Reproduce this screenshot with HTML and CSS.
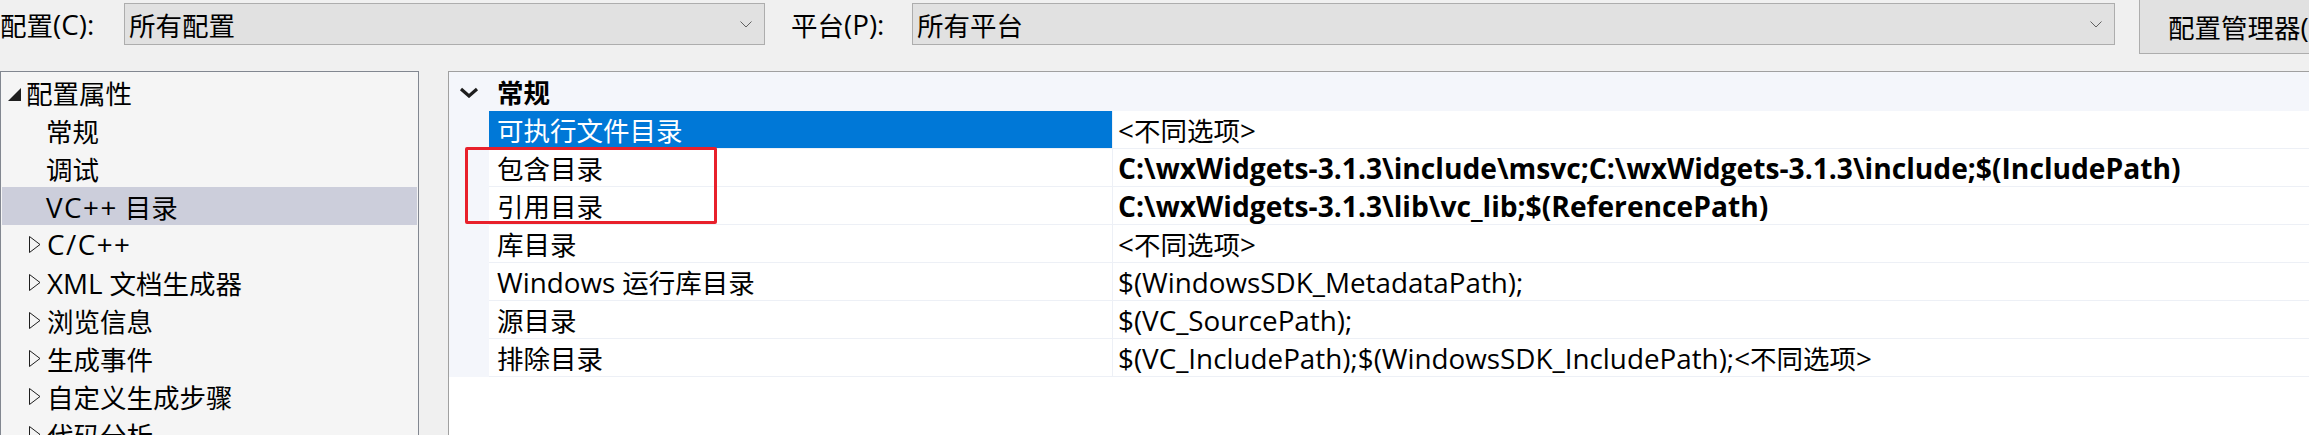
FILE: index.html
```html
<!DOCTYPE html>
<html lang="zh-CN">
<head>
<meta charset="utf-8">
<title>属性页</title>
<link rel="stylesheet" href="styles.css">
</head>
<body>
<div class="window">
  <div class="toolbar">
    <span class="lbl lbl-config">配置<span class="en">(C):</span></span>
    <div class="combo combo-config">
      <span class="combo-text">所有配置</span>
      <svg class="chev" width="12" height="7" viewBox="0 0 12 7"><polyline points="0.5,0.5 6,6 11.5,0.5" fill="none" stroke="#606060" stroke-width="1"/></svg>
    </div>
    <span class="lbl lbl-platform">平台<span class="en">(P):</span></span>
    <div class="combo combo-platform">
      <span class="combo-text">所有平台</span>
      <svg class="chev" width="12" height="7" viewBox="0 0 12 7"><polyline points="0.5,0.5 6,6 11.5,0.5" fill="none" stroke="#606060" stroke-width="1"/></svg>
    </div>
    <div class="btn">配置管理器<span class="en">(O)...</span></div>
  </div>

  <div class="main">
    <div class="tree">
      <div class="node lvl0">
        <svg class="tri-open" width="13" height="13" viewBox="0 0 13 13"><polygon points="0,13 13,13 13,0" fill="#1e1e1e"/></svg>
        <span>配置属性</span>
      </div>
      <div class="node lvl1"><span>常规</span></div>
      <div class="node lvl1"><span>调试</span></div>
      <div class="node lvl1 selected"><span><span class="en wide">VC++</span> 目录</span></div>
      <div class="node lvl1 collapsed">
        <svg class="tri-closed" width="12" height="17" viewBox="0 0 12 17"><polygon points="0.5,0.5 11,8.5 0.5,16.5" fill="none" stroke="#1e1e1e" stroke-width="1"/></svg>
        <span class="en wide">C/C++</span>
      </div>
      <div class="node lvl1 collapsed">
        <svg class="tri-closed" width="12" height="17" viewBox="0 0 12 17"><polygon points="0.5,0.5 11,8.5 0.5,16.5" fill="none" stroke="#1e1e1e" stroke-width="1"/></svg>
        <span><span class="en">XML</span> 文档生成器</span>
      </div>
      <div class="node lvl1 collapsed">
        <svg class="tri-closed" width="12" height="17" viewBox="0 0 12 17"><polygon points="0.5,0.5 11,8.5 0.5,16.5" fill="none" stroke="#1e1e1e" stroke-width="1"/></svg>
        <span>浏览信息</span>
      </div>
      <div class="node lvl1 collapsed">
        <svg class="tri-closed" width="12" height="17" viewBox="0 0 12 17"><polygon points="0.5,0.5 11,8.5 0.5,16.5" fill="none" stroke="#1e1e1e" stroke-width="1"/></svg>
        <span>生成事件</span>
      </div>
      <div class="node lvl1 collapsed">
        <svg class="tri-closed" width="12" height="17" viewBox="0 0 12 17"><polygon points="0.5,0.5 11,8.5 0.5,16.5" fill="none" stroke="#1e1e1e" stroke-width="1"/></svg>
        <span>自定义生成步骤</span>
      </div>
      <div class="node lvl1 collapsed">
        <svg class="tri-closed" width="12" height="17" viewBox="0 0 12 17"><polygon points="0.5,0.5 11,8.5 0.5,16.5" fill="none" stroke="#1e1e1e" stroke-width="1"/></svg>
        <span>代码分析</span>
      </div>
    </div>

    <div class="grid">
      <div class="cat">
        <svg class="cat-chev" width="20" height="11" viewBox="0 0 20 11"><polyline points="2,2 10,9 18,2" fill="none" stroke="#1e1e1e" stroke-width="3.2"/></svg>
        <span class="cat-name">常规</span>
      </div>
      <div class="prop selected">
        <div class="gutter"></div>
        <div class="pname">可执行文件目录</div>
        <div class="pval"><span class="en">&lt;</span>不同选项<span class="en">&gt;</span></div>
      </div>
      <div class="prop">
        <div class="gutter"></div>
        <div class="pname">包含目录</div>
        <div class="pval bold"><span class="en">C:\wxWidgets-3.1.3\include\msvc;C:\wxWidgets-3.1.3\include;$(IncludePath)</span></div>
      </div>
      <div class="prop">
        <div class="gutter"></div>
        <div class="pname">引用目录</div>
        <div class="pval bold"><span class="en">C:\wxWidgets-3.1.3\lib\vc_lib;$(ReferencePath)</span></div>
      </div>
      <div class="prop">
        <div class="gutter"></div>
        <div class="pname">库目录</div>
        <div class="pval"><span class="en">&lt;</span>不同选项<span class="en">&gt;</span></div>
      </div>
      <div class="prop">
        <div class="gutter"></div>
        <div class="pname"><span class="en">Windows</span>&nbsp;运行库目录</div>
        <div class="pval"><span class="en">$(WindowsSDK_MetadataPath);</span></div>
      </div>
      <div class="prop">
        <div class="gutter"></div>
        <div class="pname">源目录</div>
        <div class="pval"><span class="en">$(VC_SourcePath);</span></div>
      </div>
      <div class="prop">
        <div class="gutter"></div>
        <div class="pname">排除目录</div>
        <div class="pval"><span class="en">$(VC_IncludePath);$(WindowsSDK_IncludePath);&lt;</span>不同选项<span class="en">&gt;</span></div>
      </div>
      <div class="highlight"></div>
    </div>
  </div>
</div>
</body>
</html>
```

FILE: styles.css
```css
html, body {
  margin: 0;
  padding: 0;
  background: #f0f0f0;
  overflow: hidden;
}

.window {
  width: 2309px;
  height: 435px;
  overflow: hidden;
  font-family: "Open Sans", "Noto Sans CJK SC", sans-serif;
  font-size: 26.5px;
  color: #000;
}

/* Latin runs render a little larger than the CJK glyphs, as in the UI font */
.en {
  font-size: 27.8px;
}

.en.wide {
  letter-spacing: 1.5px;
}

/* toolbar */
.toolbar {
  display: flex;
  align-items: flex-start;
  height: 71px;
}

.lbl {
  height: 42px;
  margin-top: 3px;
  display: flex;
  align-items: center;
  white-space: nowrap;
  flex: none;
}

.lbl-config {
  width: 97px;
  margin-right: 27px;
}

.lbl-platform {
  width: 93px;
  margin-left: 26px;
  margin-right: 28px;
}

.combo {
  box-sizing: border-box;
  flex: none;
  height: 42px;
  margin-top: 3px;
  background: #e1e1e1;
  border: 1px solid #adadad;
  display: flex;
  align-items: center;
  justify-content: space-between;
  padding: 0 12px 0 4px;
}

.combo-config { width: 641px; }
.combo-platform { width: 1203px; }

.chev { flex: none; }

.btn {
  box-sizing: border-box;
  margin-left: 24px;
  height: 54px;
  padding: 0 28px;
  background: #e1e1e1;
  border: 1px solid #adadad;
  border-top: none;
  display: flex;
  align-items: center;
  white-space: nowrap;
  flex: none;
}

/* main */
.main {
  display: flex;
  align-items: flex-start;
  gap: 29px;
}

.tree {
  box-sizing: border-box;
  width: 419px;
  height: 400px;
  flex: none;
  background: #f5f5f5;
  border: 1px solid #828790;
  padding: 1px 0 0 1px;
}

.node {
  height: 38px;
  display: flex;
  align-items: center;
  white-space: nowrap;
  margin-right: 1px;
}

.lvl0 { padding-left: 6px; }
.lvl0 .tri-open { margin-right: 5px; margin-top: 4px; }
.lvl1 { padding-left: 44px; }
.lvl1.collapsed { padding-left: 27px; }
.lvl1.collapsed .tri-closed { margin-right: 6px; }

.node.selected { background: #cccedb; }

.grid {
  position: relative;
  flex: 1;
  margin-right: -20px;
  height: 400px;
  background: #fff;
  border-top: 1px solid #a0a0a0;
  border-left: 1px solid #a0a0a0;
}

.cat {
  height: 39px;
  background: #f4f6fb;
  display: flex;
  align-items: center;
}

.cat-chev {
  margin-left: 10px;
  margin-right: 18px;
  margin-top: 2px;
}

.cat-name { font-weight: bold; }

.prop {
  display: flex;
  height: 38px;
}

.gutter {
  width: 40px;
  flex: none;
  background: #f4f6fb;
}

.pname {
  box-sizing: border-box;
  width: 623px;
  flex: none;
  padding-left: 8px;
  display: flex;
  align-items: center;
  border-bottom: 1px solid #edf0f6;
  white-space: nowrap;
}

.prop.selected .pname {
  background: #0078d7;
  color: #fff;
}

.pval {
  box-sizing: border-box;
  flex: 1;
  padding-left: 5px;
  border-left: 1px solid #edf0f6;
  border-bottom: 1px solid #edf0f6;
  display: flex;
  align-items: center;
  white-space: pre;
}

.pval.bold { font-weight: bold; }
.pval.bold .en { font-size: 28.2px; }

.highlight {
  position: absolute;
  left: 16px;
  top: 75px;
  width: 252px;
  height: 77px;
  box-sizing: border-box;
  border: 3px solid #e8202b;
  border-radius: 2px;
}
```
